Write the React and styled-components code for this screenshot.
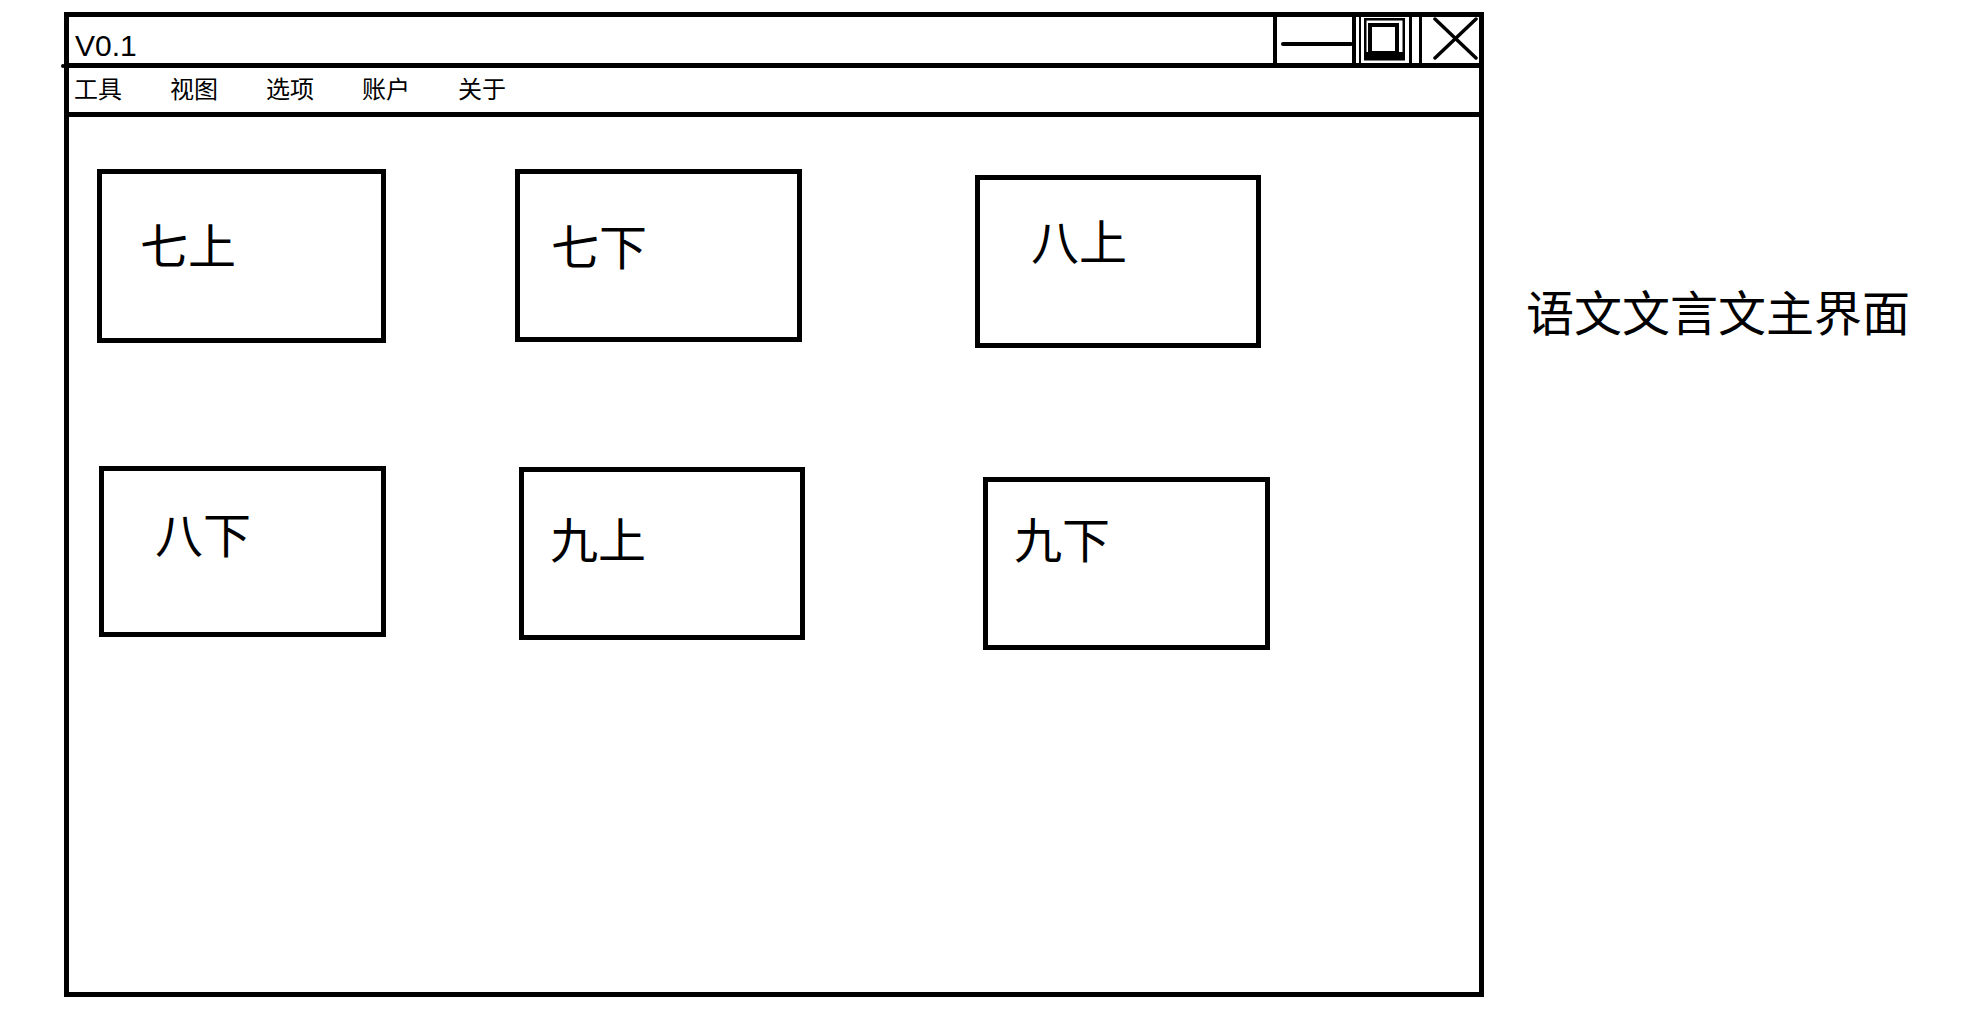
import React from "react";
import styled, { createGlobalStyle } from "styled-components";

const GlobalStyle = createGlobalStyle`
  html, body {
    margin: 0;
    padding: 0;
    background: #fff;
  }
  body {
    font-family: "Liberation Sans", "Noto Sans CJK SC", sans-serif;
    color: #000;
  }
`;

const Page = styled.div`
  display: flex;
  align-items: flex-start;
  padding: 12px 0 0 64px;
`;

const Window = styled.div`
  width: 1420px;
  height: 985px;
  box-sizing: border-box;
  border: 5px solid #000;
  display: flex;
  flex-direction: column;
`;

const TitleBar = styled.div`
  position: relative;
  height: 46px;
  border-bottom: 5px solid #000;
  display: flex;
  align-items: stretch;
  padding-left: 6px;

  &::after {
    content: "";
    position: absolute;
    left: -8px;
    top: 47px;
    width: 4px;
    height: 4px;
    border-radius: 50%;
    background: #000;
  }
`;

const Version = styled.span`
  align-self: flex-end;
  margin-bottom: 2px;
  font-size: 30px;
  line-height: 30px;
`;

const Controls = styled.svg`
  display: block;
  margin-left: auto;
  flex-shrink: 0;
`;

const MenuBar = styled.nav`
  box-sizing: content-box;
  height: 40px;
  padding: 0 0 4px 5px;
  border-bottom: 5px solid #000;
  display: flex;
  align-items: center;
  gap: 48px;
`;

const MenuItem = styled.span`
  font-family: "Noto Sans CJK SC", sans-serif;
  font-size: 24px;
  line-height: 24px;
`;

const Content = styled.main`
  flex: 1;
`;

const CardGrid = styled.div`
  display: grid;
  grid-template-columns: 418px 460px 287px;
  grid-template-rows: 297px auto;
  padding: 52px 0 0 28px;
`;

const Card = styled.div`
  justify-self: start;
  align-self: start;
  box-sizing: border-box;
  width: ${({ $w }) => $w}px;
  height: ${({ $h }) => $h}px;
  margin: ${({ $dy }) => $dy}px 0 0 ${({ $dx }) => $dx}px;
  padding: ${({ $padT }) => $padT}px 0 0 ${({ $padL }) => $padL}px;
  border: 5px solid #000;
  font-family: "Noto Sans CJK SC", sans-serif;
  font-size: 48px;
  line-height: 48px;
  white-space: nowrap;
`;

const Caption = styled.div`
  margin: 274px 0 0 42px;
  font-family: "Noto Sans CJK SC", sans-serif;
  font-size: 48px;
  line-height: 48px;
  white-space: nowrap;
`;

const menu = ["工具", "视图", "选项", "账户", "关于"];

const cards = [
  { label: "七上", w: 289, h: 174, dx: 0, dy: 0, padL: 38, padT: 45 },
  { label: "七下", w: 287, h: 173, dx: 0, dy: 0, padL: 31, padT: 46 },
  { label: "八上", w: 286, h: 173, dx: 0, dy: 6, padL: 51, padT: 35 },
  { label: "八下", w: 287, h: 171, dx: 2, dy: 0, padL: 51, padT: 37 },
  { label: "九上", w: 286, h: 173, dx: 4, dy: 1, padL: 26, padT: 41 },
  { label: "九下", w: 287, h: 173, dx: 8, dy: 11, padL: 26, padT: 31 },
];

const WindowControls = () => (
  <Controls width="206" height="46" viewBox="0 0 206 46" fill="#000">
    <rect x="0" y="0" width="4" height="46" />
    <rect x="8" y="25" width="72" height="4" rx="2" />
    <rect x="79" y="0" width="4" height="46" />
    <rect x="86" y="0" width="2" height="46" />
    <rect x="92.25" y="2.25" width="38.5" height="40" fill="none" stroke="#000" strokeWidth="2.5" />
    <rect x="97" y="8" width="27" height="28" fill="none" stroke="#000" strokeWidth="4" />
    <rect x="91" y="35" width="41" height="8" />
    <rect x="136" y="0" width="3" height="46" />
    <rect x="146" y="0" width="3" height="46" />
    <line x1="162" y1="2" x2="203" y2="41" stroke="#000" strokeWidth="3.5" strokeLinecap="round" />
    <line x1="203" y1="2" x2="162" y2="41" stroke="#000" strokeWidth="3.5" strokeLinecap="round" />
  </Controls>
);

export default function App() {
  return (
    <>
      <GlobalStyle />
      <Page>
        <Window>
          <TitleBar>
            <Version>V0.1</Version>
            <WindowControls />
          </TitleBar>
          <MenuBar>
            {menu.map((m) => (
              <MenuItem key={m}>{m}</MenuItem>
            ))}
          </MenuBar>
          <Content>
            <CardGrid>
              {cards.map((c) => (
                <Card
                  key={c.label}
                  $w={c.w}
                  $h={c.h}
                  $dx={c.dx}
                  $dy={c.dy}
                  $padL={c.padL}
                  $padT={c.padT}
                >
                  {c.label}
                </Card>
              ))}
            </CardGrid>
          </Content>
        </Window>
        <Caption>语文文言文主界面</Caption>
      </Page>
    </>
  );
}
